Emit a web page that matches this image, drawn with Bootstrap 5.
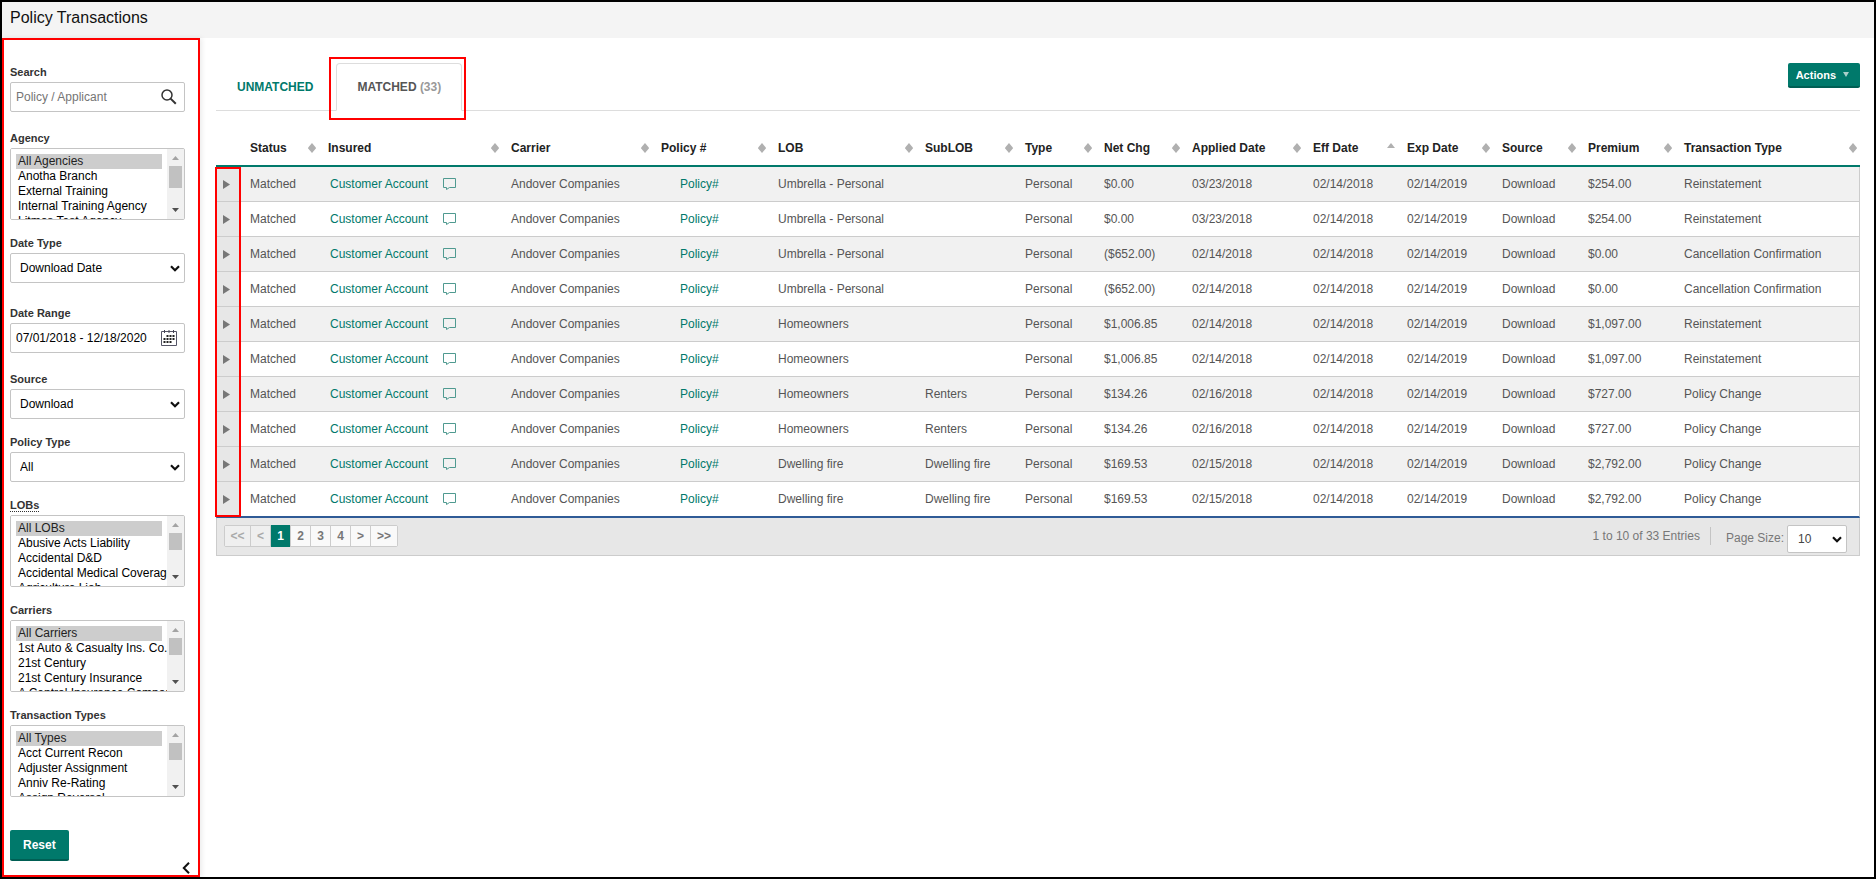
<!DOCTYPE html>
<html lang="en">
<head>
<meta charset="utf-8">
<meta name="viewport" content="width=device-width, initial-scale=1">
<title>Policy Transactions</title>
<link href="https://cdn.jsdelivr.net/npm/bootstrap@5.3.0/dist/css/bootstrap.min.css" rel="stylesheet">
<style>
  :root { --brand: #00796b; --brand-dark: #005f54; --line: #ccc; --mark: #f00; }
  body { font-family: "Liberation Sans", Arial, sans-serif; font-size: 12px; line-height: 16px; color: #555; background: #fff; }
  .app-frame { border: 2px solid #000; }
  .title-bar { background: #f4f4f4; height: 36px; padding: 0 8px 4px; }
  .title-bar h1 { font-size: 16px; line-height: 20px; color: #111; font-weight: 400; }

  /* filter sidebar */
  .filters { flex: 0 0 198px; min-width: 0; border: 2px solid var(--mark); padding: 22px 13px 14px 6px; box-shadow: 2px 0 5px rgba(0,0,0,.08); }
  .field { margin-bottom: 13px; }
  .field-search { margin-bottom: 16px; }
  .field-wide { margin-bottom: 20px; }
  .field > label { display: block; height: 20px; font-size: 11px; line-height: 20px; font-weight: 700; color: #333; }
  .field > label abbr { text-decoration: none; border-bottom: 1px dotted #333; display: inline-block; line-height: 12px; cursor: help; }
  .box-in { border: 1px solid #c4c4c4; border-radius: 2px; background: #fff; }
  .box-in input { border: 0; outline: 0; padding: 0 0 0 5px; height: 28px; min-width: 0; font-size: 12px; color: #000; background: transparent; }
  .box-in input::placeholder { color: #757575; }
  .icon-btn { border: 0; background: none; padding: 0 7px 0 0; line-height: 0; }
  .drop { appearance: none; width: 100%; height: 30px; border: 1px solid #c4c4c4; border-radius: 2px; padding: 0 20px 0 9px; font-size: 12px; color: #000; line-height: 16px;
    background: #fff url("data:image/svg+xml,%3Csvg xmlns='http://www.w3.org/2000/svg' width='10' height='7' viewBox='0 0 10 7'%3E%3Cpath d='M1 1.2l4 4 4-4' fill='none' stroke='%23111' stroke-width='2.2'/%3E%3C/svg%3E") no-repeat right 4px center; }
  .list-box { height: 72px; overflow: hidden; }
  .list-box select { border: 0; outline: 0; padding: 5px; height: 70px; flex: 1 1 0; min-width: 0; overflow: hidden; scrollbar-width: none; font-size: 12px; color: #000; background: #fff; border-radius: 0; }
  .list-box select::-webkit-scrollbar { display: none; }
  .list-box svg { flex: none; }
  .list-box option { height: 15px; min-height: 15px; padding: 0 2px; line-height: 15px; overflow: visible; }
  .list-box option:checked { background: #cdcdcd linear-gradient(#cdcdcd, #cdcdcd); color: #222; }
  .solid-btn { border: 0; border-bottom: 2px solid var(--brand-dark); border-radius: 2px; background: var(--brand); color: #fff; font-weight: 700; }
  .btn-reset { font-size: 12px; height: 31px; padding: 0 13px; margin-top: 20px; }

  /* content */
  .content { padding: 25px 14px 16px 16px; min-width: 0; }
  .tab-strip { height: 48px; border-bottom: 1px solid #ddd; }
  .tab-strip .tab-link { height: 48px; padding: 0 22px 0 20px; font-weight: 700; color: var(--brand); text-decoration: none; display: flex; align-items: center; border: 1px solid transparent; }
  .tab-strip .tab-link.current { padding: 0 20px; color: #555; background: #fff; border-color: #ddd; border-bottom-color: #fff; border-radius: 4px 4px 0 0; }
  .tab-strip .tally { color: #999; }
  .tab-mark { position: absolute; inset: -6px -4px -10px -7px; border: 2px solid var(--mark); pointer-events: none; }
  .btn-actions { font-size: 11px; height: 25px; padding: 0 11px 0 8px; gap: 7px; }

  .grid-tbl { width: 100%; table-layout: fixed; border-collapse: separate; border-spacing: 0; margin-top: 19px; }
  .grid-tbl th { height: 37px; padding: 0 3px 0 9px; color: #222; font-weight: 700; border-bottom: 2px solid var(--brand); white-space: nowrap; vertical-align: middle; }
  .grid-tbl td { height: 35px; padding: 0 0 0 9px; border-bottom: 1px solid var(--line); white-space: nowrap; vertical-align: middle; }
  .grid-tbl tbody tr:nth-child(odd) td { background: #f1f1f1; }
  .grid-tbl tbody tr:last-child td { height: 36px; border-bottom: 2px solid #2f5b96; }
  .grid-tbl tbody td:last-child { border-right: 1px solid var(--line); }
  .grid-tbl tbody tr td:first-child { background: #e7e7e7; padding: 0 0 0 6px; border-left: 1px solid var(--line); }
  .grid-tbl td a { color: var(--brand); text-decoration: none; }
  .grid-tbl td button { border: 0; background: none; padding: 0; line-height: 0; display: block; }
  .cust { display: flex; align-items: center; gap: 15px; padding-left: 2px; }
  .pol { padding-left: 19px; }
  .c-exp { width: 25px } .c-sta { width: 78px } .c-ins { width: 183px } .c-car { width: 150px } .c-pol { width: 117px }
  .c-lob { width: 147px } .c-sub { width: 100px } .c-typ { width: 79px } .c-net { width: 88px } .c-app { width: 121px }
  .c-eff { width: 94px } .c-xpd { width: 95px } .c-src { width: 86px } .c-prm { width: 96px } .c-trn { width: 185px }
  .expand-mark { position: absolute; left: -1px; top: 37px; bottom: 1px; width: 26px; border: 2px solid var(--mark); pointer-events: none; }

  .grid-foot { background: #e7e7e7; border: 1px solid var(--line); border-top: 0; height: 38px; padding: 0 12px 0 7px; color: #777; }
  .pager { border: 1px solid var(--line); border-radius: 2px; height: 22px; margin-top: 7px; }
  .pager button { border: 0; border-right: 1px solid var(--line); background: #f9f9f9; color: #777; font-weight: 700; width: 20px; padding: 0; line-height: 20px; }
  .pager button.ends { width: 26px; }
  .pager button:last-child { border-right: 0; }
  .pager button:disabled { background: #efefef; color: #aaa; }
  .pager button.now { background: var(--brand); color: #fff; margin: -1px 0; }
  .foot-rule { width: 1px; height: 18px; background: #c4c4c4; margin: 9px 15px 0 10px; }
  .foot-count { margin-top: 10px; }
  .foot-size { margin: 12px 3px 0 0; }
  .drop-size { width: 60px; height: 28px; margin-top: 7px; color: #444; padding-left: 10px; }
</style>
</head>
<body>
<svg width="0" height="0" class="position-absolute" aria-hidden="true">
  <symbol id="sort" viewBox="0 0 8 10"><path d="M4 0l3.800 4.500v1L4 10 .2 5.500v-1z" fill="#b0b0b0"/></symbol>
  <symbol id="sortup" viewBox="0 0 8 10"><path d="M4 0l4 5H0z" fill="#b0b0b0"/></symbol>
  <symbol id="tri" viewBox="0 0 7 9"><path d="M0 0l7 4.500L0 9z" fill="#777"/></symbol>
  <symbol id="note" viewBox="0 0 13 12"><path d="M.5.5h12v9H6.500L3.500 11.500v-2h-3z" fill="none" stroke="#4f9a90"/></symbol>
  <symbol id="bar" viewBox="0 0 17 70"><path fill="#f1f1f1" d="M0 0h17v70H0z"/><path fill="#a3a3a3" d="M5 11l3.500-4 3.500 4z"/><path fill="#c1c1c1" d="M2 17h13v17H2z"/><path fill="#505050" d="M5 59h7l-3.500 4z"/></symbol>
  <symbol id="bar-tall" viewBox="0 0 17 70"><path fill="#f1f1f1" d="M0 0h17v70H0z"/><path fill="#a3a3a3" d="M5 11l3.500-4 3.500 4z"/><path fill="#c1c1c1" d="M2 17h13v22H2z"/><path fill="#505050" d="M5 59h7l-3.500 4z"/></symbol>
</svg>

<div class="app-frame d-flex flex-column min-vh-100">
  <header class="title-bar d-flex align-items-center"><h1 class="m-0">Policy Transactions</h1></header>

  <div class="d-flex flex-grow-1">
    <aside class="filters d-flex flex-column position-relative">
      <form>
        <div class="field field-search">
          <label for="q">Search</label>
          <div class="box-in d-flex align-items-center">
            <input id="q" type="text" class="flex-grow-1" placeholder="Policy / Applicant">
            <button type="button" class="icon-btn" aria-label="Search"><svg width="16" height="16" viewBox="0 0 16 16" fill="none" stroke="#333"><circle cx="6" cy="6" r="5" stroke-width="1.500"/><path d="M9.600 9.600l5.200 5.200" stroke-width="2"/></svg></button>
          </div>
        </div>
        <div class="field">
          <label for="agency">Agency</label>
          <div class="box-in list-box d-flex">
            <select id="agency" multiple size="4"><option selected>All Agencies</option><option>Anotha Branch</option><option>External Training</option><option>Internal Training Agency</option><option>Litmos Test Agency</option></select>
            <svg width="17" height="70" aria-hidden="true"><use href="#bar-tall"/></svg>
          </div>
        </div>
        <div class="field field-wide">
          <label for="dtype">Date Type</label>
          <select id="dtype" class="drop"><option>Download Date</option></select>
        </div>
        <div class="field field-search">
          <label for="range">Date Range</label>
          <div class="box-in d-flex align-items-center">
            <input id="range" type="text" class="flex-grow-1" value="07/01/2018 - 12/18/2020">
            <button type="button" class="icon-btn" aria-label="Pick dates"><svg width="16" height="16" viewBox="0 0 16 16"><path d="M.5 1.500h15v14H.5z" fill="#fff" stroke="#556"/><path d="M3.500 0v3M8 0v3M12.500 0v3" stroke="#445"/><path d="M5.500 6h8M2.500 9h11M2.500 12h8" stroke="#222" stroke-width="2" stroke-dasharray="2 1"/></svg></button>
          </div>
        </div>
        <div class="field">
          <label for="src">Source</label>
          <select id="src" class="drop"><option>Download</option></select>
        </div>
        <div class="field">
          <label for="ptype">Policy Type</label>
          <select id="ptype" class="drop"><option>All</option></select>
        </div>
        <div class="field">
          <label for="lobs"><abbr title="Lines of business">LOBs</abbr></label>
          <div class="box-in list-box d-flex">
            <select id="lobs" multiple size="4"><option selected>All LOBs</option><option>Abusive Acts Liability</option><option>Accidental D&amp;D</option><option>Accidental Medical Coverage</option><option>Agriculture Liab</option></select>
            <svg width="17" height="70" aria-hidden="true"><use href="#bar"/></svg>
          </div>
        </div>
        <div class="field">
          <label for="carriers">Carriers</label>
          <div class="box-in list-box d-flex">
            <select id="carriers" multiple size="4"><option selected>All Carriers</option><option>1st Auto &amp; Casualty Ins. Co.</option><option>21st Century</option><option>21st Century Insurance</option><option>A Central Insurance Company</option></select>
            <svg width="17" height="70" aria-hidden="true"><use href="#bar"/></svg>
          </div>
        </div>
        <div class="field">
          <label for="ttypes">Transaction Types</label>
          <div class="box-in list-box d-flex">
            <select id="ttypes" multiple size="4"><option selected>All Types</option><option>Acct Current Recon</option><option>Adjuster Assignment</option><option>Anniv Re-Rating</option><option>Assign Reversal</option></select>
            <svg width="17" height="70" aria-hidden="true"><use href="#bar"/></svg>
          </div>
        </div>
        <button type="reset" class="solid-btn btn-reset">Reset</button>
      </form>
      <button type="button" class="icon-btn pe-2 position-absolute bottom-0 end-0" aria-label="Collapse filters"><svg width="8" height="13" viewBox="0 0 8 13"><path d="M7 .8L1.800 6 7 11.200" fill="none" stroke="#111" stroke-width="2"/></svg></button>
    </aside>

    <main class="content flex-grow-1">
      <div class="tab-strip d-flex">
        <nav class="d-flex">
          <a href="#" class="tab-link">UNMATCHED</a>
          <div class="position-relative">
            <a href="#" class="tab-link current">MATCHED&nbsp;<span class="tally">(33)</span></a>
            <span class="tab-mark"></span>
          </div>
        </nav>
        <button type="button" class="solid-btn btn-actions d-flex align-items-center ms-auto">Actions <svg width="6" height="5" viewBox="0 0 6 5"><path d="M0 0h6L3 5z" fill="#a9cfca"/></svg></button>
      </div>

      <div class="position-relative">
        <table class="grid-tbl">
          <colgroup><col class="c-exp"><col class="c-sta"><col class="c-ins"><col class="c-car"><col class="c-pol"><col class="c-lob"><col class="c-sub"><col class="c-typ"><col class="c-net"><col class="c-app"><col class="c-eff"><col class="c-xpd"><col class="c-src"><col class="c-prm"><col class="c-trn"></colgroup>
          <thead>
            <tr>
              <th></th>
              <th><div class="d-flex align-items-center justify-content-between">Status<svg width="8" height="10"><use href="#sort"/></svg></div></th>
              <th><div class="d-flex align-items-center justify-content-between">Insured<svg width="8" height="10"><use href="#sort"/></svg></div></th>
              <th><div class="d-flex align-items-center justify-content-between">Carrier<svg width="8" height="10"><use href="#sort"/></svg></div></th>
              <th><div class="d-flex align-items-center justify-content-between">Policy #<svg width="8" height="10"><use href="#sort"/></svg></div></th>
              <th><div class="d-flex align-items-center justify-content-between">LOB<svg width="8" height="10"><use href="#sort"/></svg></div></th>
              <th><div class="d-flex align-items-center justify-content-between">SubLOB<svg width="8" height="10"><use href="#sort"/></svg></div></th>
              <th><div class="d-flex align-items-center justify-content-between">Type<svg width="8" height="10"><use href="#sort"/></svg></div></th>
              <th><div class="d-flex align-items-center justify-content-between">Net Chg<svg width="8" height="10"><use href="#sort"/></svg></div></th>
              <th><div class="d-flex align-items-center justify-content-between">Applied Date<svg width="8" height="10"><use href="#sort"/></svg></div></th>
              <th><div class="d-flex align-items-center justify-content-between">Eff Date<svg width="8" height="10"><use href="#sortup"/></svg></div></th>
              <th><div class="d-flex align-items-center justify-content-between">Exp Date<svg width="8" height="10"><use href="#sort"/></svg></div></th>
              <th><div class="d-flex align-items-center justify-content-between">Source<svg width="8" height="10"><use href="#sort"/></svg></div></th>
              <th><div class="d-flex align-items-center justify-content-between">Premium<svg width="8" height="10"><use href="#sort"/></svg></div></th>
              <th><div class="d-flex align-items-center justify-content-between">Transaction Type<svg width="8" height="10"><use href="#sort"/></svg></div></th>
            </tr>
          </thead>
          <tbody>
            <tr><td><button aria-label="Expand"><svg width="7" height="9"><use href="#tri"/></svg></button></td><td>Matched</td><td><div class="cust"><a href="#">Customer Account</a><svg width="13" height="12"><use href="#note"/></svg></div></td><td>Andover Companies</td><td><a href="#" class="pol">Policy#</a></td><td>Umbrella - Personal</td><td></td><td>Personal</td><td>$0.00</td><td>03/23/2018</td><td>02/14/2018</td><td>02/14/2019</td><td>Download</td><td>$254.00</td><td>Reinstatement</td></tr>
            <tr><td><button aria-label="Expand"><svg width="7" height="9"><use href="#tri"/></svg></button></td><td>Matched</td><td><div class="cust"><a href="#">Customer Account</a><svg width="13" height="12"><use href="#note"/></svg></div></td><td>Andover Companies</td><td><a href="#" class="pol">Policy#</a></td><td>Umbrella - Personal</td><td></td><td>Personal</td><td>$0.00</td><td>03/23/2018</td><td>02/14/2018</td><td>02/14/2019</td><td>Download</td><td>$254.00</td><td>Reinstatement</td></tr>
            <tr><td><button aria-label="Expand"><svg width="7" height="9"><use href="#tri"/></svg></button></td><td>Matched</td><td><div class="cust"><a href="#">Customer Account</a><svg width="13" height="12"><use href="#note"/></svg></div></td><td>Andover Companies</td><td><a href="#" class="pol">Policy#</a></td><td>Umbrella - Personal</td><td></td><td>Personal</td><td>($652.00)</td><td>02/14/2018</td><td>02/14/2018</td><td>02/14/2019</td><td>Download</td><td>$0.00</td><td>Cancellation Confirmation</td></tr>
            <tr><td><button aria-label="Expand"><svg width="7" height="9"><use href="#tri"/></svg></button></td><td>Matched</td><td><div class="cust"><a href="#">Customer Account</a><svg width="13" height="12"><use href="#note"/></svg></div></td><td>Andover Companies</td><td><a href="#" class="pol">Policy#</a></td><td>Umbrella - Personal</td><td></td><td>Personal</td><td>($652.00)</td><td>02/14/2018</td><td>02/14/2018</td><td>02/14/2019</td><td>Download</td><td>$0.00</td><td>Cancellation Confirmation</td></tr>
            <tr><td><button aria-label="Expand"><svg width="7" height="9"><use href="#tri"/></svg></button></td><td>Matched</td><td><div class="cust"><a href="#">Customer Account</a><svg width="13" height="12"><use href="#note"/></svg></div></td><td>Andover Companies</td><td><a href="#" class="pol">Policy#</a></td><td>Homeowners</td><td></td><td>Personal</td><td>$1,006.85</td><td>02/14/2018</td><td>02/14/2018</td><td>02/14/2019</td><td>Download</td><td>$1,097.00</td><td>Reinstatement</td></tr>
            <tr><td><button aria-label="Expand"><svg width="7" height="9"><use href="#tri"/></svg></button></td><td>Matched</td><td><div class="cust"><a href="#">Customer Account</a><svg width="13" height="12"><use href="#note"/></svg></div></td><td>Andover Companies</td><td><a href="#" class="pol">Policy#</a></td><td>Homeowners</td><td></td><td>Personal</td><td>$1,006.85</td><td>02/14/2018</td><td>02/14/2018</td><td>02/14/2019</td><td>Download</td><td>$1,097.00</td><td>Reinstatement</td></tr>
            <tr><td><button aria-label="Expand"><svg width="7" height="9"><use href="#tri"/></svg></button></td><td>Matched</td><td><div class="cust"><a href="#">Customer Account</a><svg width="13" height="12"><use href="#note"/></svg></div></td><td>Andover Companies</td><td><a href="#" class="pol">Policy#</a></td><td>Homeowners</td><td>Renters</td><td>Personal</td><td>$134.26</td><td>02/16/2018</td><td>02/14/2018</td><td>02/14/2019</td><td>Download</td><td>$727.00</td><td>Policy Change</td></tr>
            <tr><td><button aria-label="Expand"><svg width="7" height="9"><use href="#tri"/></svg></button></td><td>Matched</td><td><div class="cust"><a href="#">Customer Account</a><svg width="13" height="12"><use href="#note"/></svg></div></td><td>Andover Companies</td><td><a href="#" class="pol">Policy#</a></td><td>Homeowners</td><td>Renters</td><td>Personal</td><td>$134.26</td><td>02/16/2018</td><td>02/14/2018</td><td>02/14/2019</td><td>Download</td><td>$727.00</td><td>Policy Change</td></tr>
            <tr><td><button aria-label="Expand"><svg width="7" height="9"><use href="#tri"/></svg></button></td><td>Matched</td><td><div class="cust"><a href="#">Customer Account</a><svg width="13" height="12"><use href="#note"/></svg></div></td><td>Andover Companies</td><td><a href="#" class="pol">Policy#</a></td><td>Dwelling fire</td><td>Dwelling fire</td><td>Personal</td><td>$169.53</td><td>02/15/2018</td><td>02/14/2018</td><td>02/14/2019</td><td>Download</td><td>$2,792.00</td><td>Policy Change</td></tr>
            <tr><td><button aria-label="Expand"><svg width="7" height="9"><use href="#tri"/></svg></button></td><td>Matched</td><td><div class="cust"><a href="#">Customer Account</a><svg width="13" height="12"><use href="#note"/></svg></div></td><td>Andover Companies</td><td><a href="#" class="pol">Policy#</a></td><td>Dwelling fire</td><td>Dwelling fire</td><td>Personal</td><td>$169.53</td><td>02/15/2018</td><td>02/14/2018</td><td>02/14/2019</td><td>Download</td><td>$2,792.00</td><td>Policy Change</td></tr>
          </tbody>
        </table>
        <span class="expand-mark"></span>
      </div>

      <div class="grid-foot d-flex align-items-start">
        <div class="pager d-flex">
          <button type="button" class="ends" disabled>&lt;&lt;</button><button type="button" disabled>&lt;</button><button type="button" class="now">1</button><button type="button">2</button><button type="button">3</button><button type="button">4</button><button type="button">&gt;</button><button type="button" class="ends">&gt;&gt;</button>
        </div>
        <span class="foot-count ms-auto">1 to 10 of 33 Entries</span>
        <span class="foot-rule"></span>
        <label for="psize" class="foot-size">Page Size:</label>
        <select id="psize" class="drop drop-size"><option>10</option></select>
      </div>
    </main>
  </div>
</div>
<script src="https://cdn.jsdelivr.net/npm/bootstrap@5.3.0/dist/js/bootstrap.bundle.min.js"></script>
</body>
</html>
